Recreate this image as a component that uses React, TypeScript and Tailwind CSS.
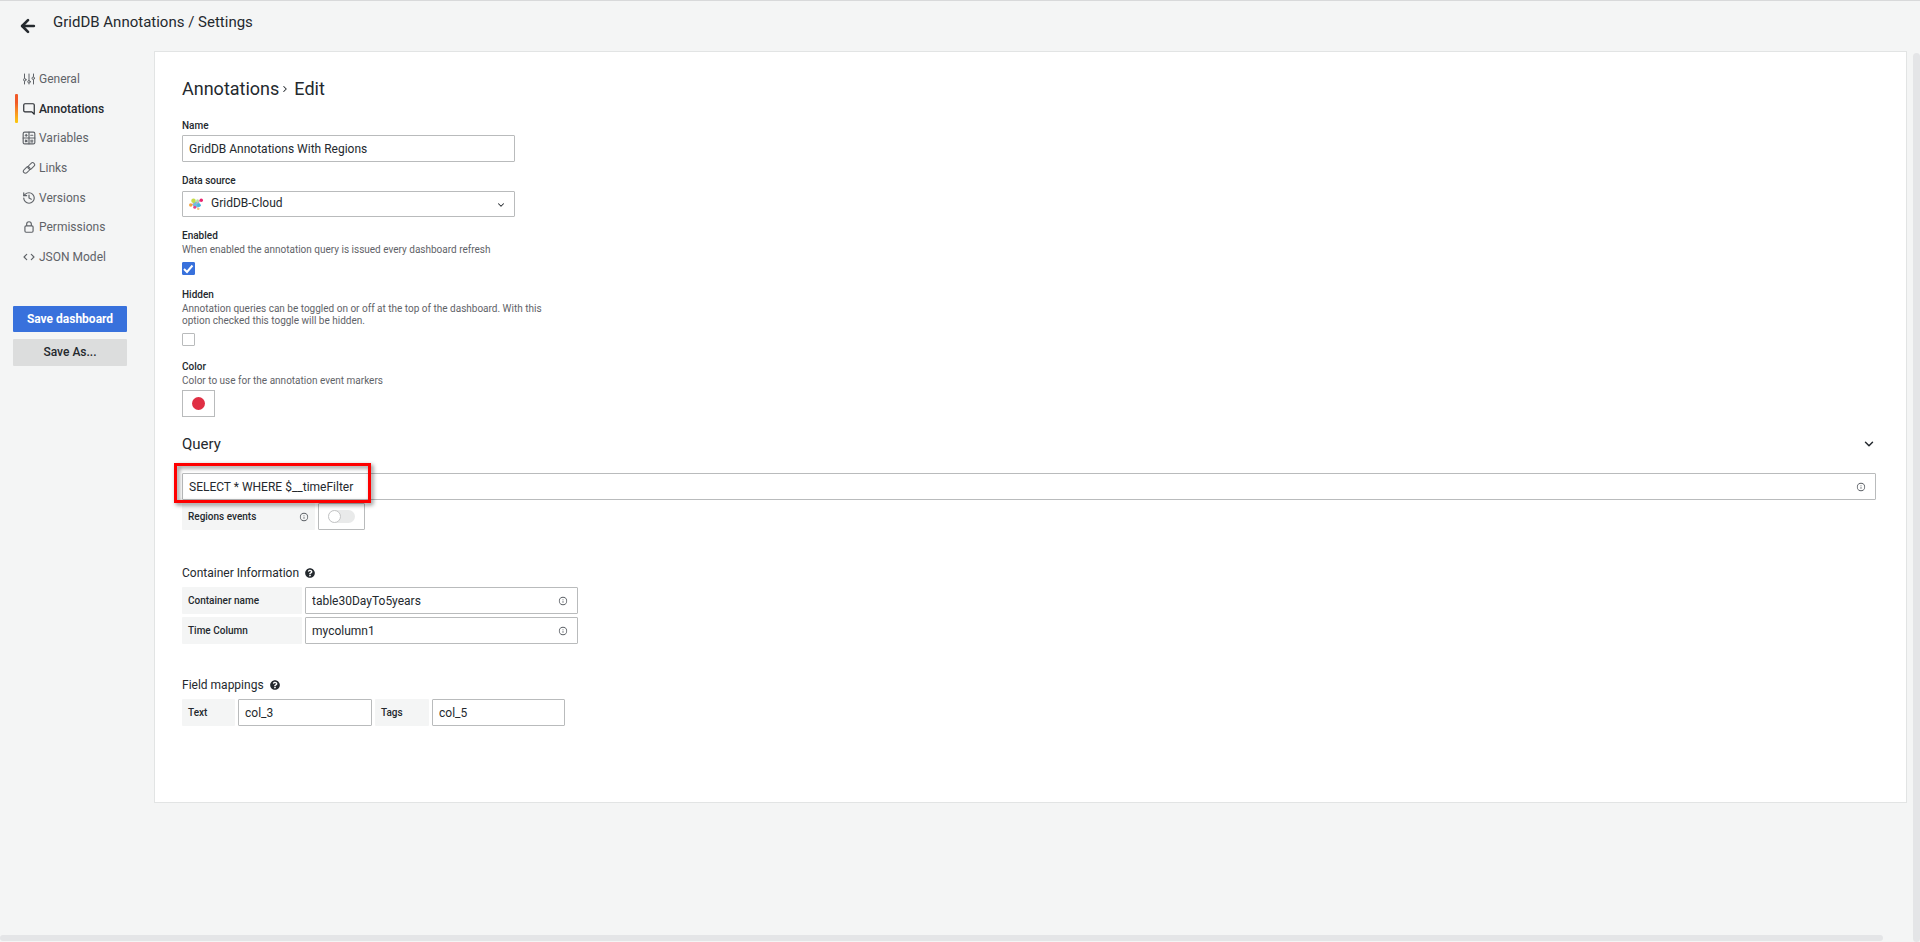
import { useState } from "react";
import type { ReactNode } from "react";
import { ArrowLeft, ChevronDown, ChevronRight, History } from "lucide-react";
import { FaQuestionCircle } from "react-icons/fa";

const INPUT =
  "h-[27px] rounded-[1px] border border-[#b9bbbc] bg-white px-1.5 text-xs text-[#24292e] focus:outline-none focus:border-[#3871dc]";
const LABEL = "block text-[10px] leading-[14px] font-medium";
const INLINE_LABEL =
  "flex h-[27px] items-center rounded-[1px] bg-[#f4f5f5] px-1.5 text-[10px] font-medium text-[#24292e]";

function SlidersIcon() {
  return (
    <svg viewBox="0 0 24 24" className="size-3" fill="none" stroke="currentColor" strokeWidth="2" strokeLinecap="round">
      <path d="M3 2v8M3 17v5M12 2v12M12 21v1M21 2v5M21 14v8" />
      <circle cx="3.500" cy="13.500" r="2.500" />
      <circle cx="12" cy="17.500" r="2.500" />
      <circle cx="20.500" cy="10.500" r="2.500" />
    </svg>
  );
}

function CommentIcon() {
  return (
    <svg viewBox="0 0 24 24" className="size-3.5" fill="currentColor">
      <path d="M19,2H5A3,3,0,0,0,2,5V15a3,3,0,0,0,3,3H16.59l3.7,3.71A1,1,0,0,0,21,22a.84.84,0,0,0,.38-.08A1,1,0,0,0,22,21V5A3,3,0,0,0,19,2Zm1,16.59-2.29-2.3A1,1,0,0,0,17,16H5a1,1,0,0,1-1-1V5A1,1,0,0,1,5,4H19a1,1,0,0,1,1,1Z" />
    </svg>
  );
}

function VariablesIcon() {
  return (
    <svg viewBox="0 0 24 24" className="size-3.5" fill="none" stroke="currentColor" strokeWidth="2" strokeLinecap="round">
      <rect x="2" y="2" width="20" height="20" rx="2.5" />
      <path d="M12 2v20M2 12h20M5.5 7.3h3.5M7.2 5.5V9M15 7.3h3.5M5.8 15.6l2.8 2.8M8.6 15.6l-2.8 2.8M15 15.8h3.5M15 18.6h3.5" />
    </svg>
  );
}

function LinkIcon() {
  return (
    <svg viewBox="0 0 24 24" className="size-3.5" fill="none" stroke="currentColor" strokeWidth="1.8">
      <rect x="9.500" y="5" width="13" height="7" rx="3.500" transform="rotate(-45 16 8.500)" />
      <rect x="1.500" y="12" width="13" height="7" rx="3.500" transform="rotate(-45 8 15.500)" />
    </svg>
  );
}

function LockIcon() {
  return (
    <svg viewBox="0 0 24 24" className="size-3.5" fill="currentColor">
      <path d="M17,9V7A5,5,0,0,0,7,7V9a3,3,0,0,0-3,3v7a3,3,0,0,0,3,3H17a3,3,0,0,0,3-3V12A3,3,0,0,0,17,9ZM9,7a3,3,0,0,1,6,0V9H9Zm9,12a1,1,0,0,1-1,1H7a1,1,0,0,1-1-1V12a1,1,0,0,1,1-1H17a1,1,0,0,1,1,1Z" />
    </svg>
  );
}

function BracketsIcon() {
  return (
    <svg viewBox="0 0 24 24" className="size-3.5" fill="none" stroke="currentColor" strokeWidth="2" strokeLinecap="round" strokeLinejoin="round">
      <path d="M8 7.500 3.500 12 8 16.500M16 7.500 20.500 12 16 16.500" />
    </svg>
  );
}

function InfoIcon() {
  return (
    <svg viewBox="0 0 24 24" className="size-2.5 shrink-0 text-[#5c6066]" fill="currentColor">
      <path d="M12,2A10,10,0,1,0,22,12,10,10,0,0,0,12,2Zm0,18a8,8,0,1,1,8-8A8,8,0,0,1,12,20Zm0-8.5a1,1,0,0,0-1,1v3a1,1,0,0,0,2,0v-3A1,1,0,0,0,12,11.5Zm0-4a1.25,1.25,0,1,0,1.25,1.25A1.25,1.25,0,0,0,12,7.5Z" />
    </svg>
  );
}

function GridDBLogo() {
  return (
    <svg viewBox="0 0 28 24" className="h-3 w-3.5">
      <path d="M8 8l11-2 4 9-5 4-8-1-3-4z" fill="#6cc0de" />
      <path d="M23 5l-9 6M4 15l6-4" stroke="#e79ab5" strokeWidth="2" />
      <circle cx="9" cy="5.500" r="4.500" fill="#c6dc4a" />
      <circle cx="17" cy="5.500" r="3" fill="#b9dfa8" />
      <circle cx="24.500" cy="4.500" r="3.500" fill="#e9246f" />
      <circle cx="3.500" cy="14" r="3.500" fill="#f5a33c" />
      <circle cx="11.500" cy="18.500" r="3" fill="#e6408a" />
      <circle cx="18.500" cy="21.500" r="2.500" fill="#f9c27a" />
      <circle cx="20" cy="14.500" r="3.500" fill="#46b4e0" />
    </svg>
  );
}

const NAV_ITEMS: { label: string; icon: ReactNode; active?: boolean }[] = [
  { label: "General", icon: <SlidersIcon /> },
  { label: "Annotations", icon: <CommentIcon />, active: true },
  { label: "Variables", icon: <VariablesIcon /> },
  { label: "Links", icon: <LinkIcon /> },
  { label: "Versions", icon: <History className="size-3.5" /> },
  { label: "Permissions", icon: <LockIcon /> },
  { label: "JSON Model", icon: <BracketsIcon /> },
];

function Sidebar() {
  return (
    <aside className="w-[154px] shrink-0 pt-[13px]">
      <nav className="grid h-52 auto-rows-fr pl-[15px]">
        {NAV_ITEMS.map(item => (
          <a
            key={item.label}
            href="#"
            className={`relative flex items-center gap-[3px] pl-[7px] text-xs ${
              item.active ? "font-medium text-[#24292e]" : "text-[#5f6368] hover:text-[#24292e]"
            }`}
          >
            {item.active && (
              <span className="absolute inset-y-0 left-0 w-[3px] rounded-[1px] bg-linear-to-b from-[#f05a28] from-30% to-[#fbca0a]" />
            )}
            <span className="flex w-3.5 justify-center">{item.icon}</span>
            {item.label}
          </a>
        ))}
      </nav>
      <div className="mt-[34px] flex flex-col gap-[7px] pr-[27px] pl-[13px]">
        <button className="h-[26px] rounded-[1px] bg-[#3871dc] text-xs font-bold text-white">Save dashboard</button>
        <button className="h-[27px] rounded-[1px] bg-[#dcdddd] pb-px text-xs font-medium text-[#24292e]">Save As...</button>
      </div>
    </aside>
  );
}

interface CheckFieldProps {
  id: string;
  label: string;
  description: string;
  checked: boolean;
  onChange: (value: boolean) => void;
}

function CheckField({ id, label, description, checked, onChange }: CheckFieldProps) {
  return (
    <div>
      <label htmlFor={id} className={LABEL}>{label}</label>
      <p className="mt-px max-w-[380px] text-[10px] leading-3 text-[#5f6368]">{description}</p>
      <div className="relative mt-1.5 size-[13px]">
        <input
          id={id}
          type="checkbox"
          checked={checked}
          onChange={e => onChange(e.target.checked)}
          className="peer block size-[13px] appearance-none rounded-[1px] border border-[#b9bbbc] bg-white checked:border-[#3871dc] checked:bg-[#3871dc]"
        />
        <svg viewBox="0 0 13 13" className="pointer-events-none absolute inset-0 hidden peer-checked:block" fill="none" stroke="white" strokeWidth="2">
          <path d="M2 7l3 3 5.500-6.500" />
        </svg>
      </div>
    </div>
  );
}

function InfoInput({ id, value, onChange }: { id: string; value: string; onChange: (value: string) => void }) {
  return (
    <div className="relative flex-1">
      <input id={id} value={value} onChange={e => onChange(e.target.value)} className={`${INPUT} block w-full pr-7`} />
      <span className="absolute inset-y-0 right-2.5 flex items-center"><InfoIcon /></span>
    </div>
  );
}

export default function App() {
  const [name, setName] = useState("GridDB Annotations With Regions");
  const [enabled, setEnabled] = useState(true);
  const [hidden, setHidden] = useState(false);
  const [query, setQuery] = useState("SELECT * WHERE $__timeFilter");
  const [regions, setRegions] = useState(false);
  const [container, setContainer] = useState("table30DayTo5years");
  const [timeColumn, setTimeColumn] = useState("mycolumn1");
  const [textField, setTextField] = useState("col_3");
  const [tagsField, setTagsField] = useState("col_5");

  return (
    <div className="flex min-h-screen flex-col border-t border-[#d8d9da] bg-[#f4f5f5] font-[Roboto,sans-serif] text-[#24292e]">
      <header className="flex h-[50px] items-start pl-[18px]">
        <button aria-label="Back" className="mt-[15px] mr-[15px]">
          <ArrowLeft className="size-5" strokeWidth={3.2} />
        </button>
        <h1 className="mt-3 text-[15px] leading-[18px]">GridDB Annotations / Settings</h1>
      </header>

      <div className="flex flex-1">
        <Sidebar />

        <main className="min-w-0 flex-1">
          <div className="border border-[#e2e4e4] bg-white pt-[25px] pr-[30px] pb-[76px] pl-[27px]">
            <h2 className="flex items-center text-lg leading-6">
              Annotations
              <ChevronRight className="mr-1 ml-px size-2.5" strokeWidth={2.5} />
              Edit
            </h2>

            <label htmlFor="name" className={`${LABEL} mt-[18px]`}>Name</label>
            <input id="name" value={name} onChange={e => setName(e.target.value)} className={`${INPUT} mt-[2px] block w-[333px]`} />

            <label htmlFor="source" className={`${LABEL} mt-3`}>Data source</label>
            <div className="relative mt-[3px] w-[333px]">
              <select id="source" className="block h-[26px] w-full appearance-none rounded-[1px] border border-[#b9bbbc] bg-white pb-[2px] pl-7 text-xs">
                <option>GridDB-Cloud</option>
              </select>
              <span className="pointer-events-none absolute inset-y-0 left-[7px] flex items-center"><GridDBLogo /></span>
              <ChevronDown className="pointer-events-none absolute top-[9px] right-[9px] size-2.5" strokeWidth={2.5} />
            </div>

            <div className="mt-3 flex flex-col gap-[13px]">
              <CheckField
                id="enabled"
                label="Enabled"
                description="When enabled the annotation query is issued every dashboard refresh"
                checked={enabled}
                onChange={setEnabled}
              />
              <CheckField
                id="hidden"
                label="Hidden"
                description="Annotation queries can be toggled on or off at the top of the dashboard. With this option checked this toggle will be hidden."
                checked={hidden}
                onChange={setHidden}
              />
            </div>

            <h3 className={`${LABEL} mt-3.5`}>Color</h3>
            <p className="text-[10px] leading-[14px] text-[#5f6368]">Color to use for the annotation event markers</p>
            <button aria-label="Pick color" className="mt-[2px] flex h-[27px] w-[33px] items-center justify-center border border-[#b9bbbc] bg-white">
              <span className="size-[13px] rounded-full bg-[#e02f44]" />
            </button>

            <div className="mt-[17px] flex items-center justify-between">
              <label htmlFor="query" className="text-[15px] leading-5">Query</label>
              <button aria-label="Collapse query"><ChevronDown className="size-3.5" strokeWidth={2.5} /></button>
            </div>

            <div className="relative mt-[19px] flex">
              <InfoInput id="query" value={query} onChange={setQuery} />
              <span className="pointer-events-none absolute -top-[10px] -left-2 z-10 h-10 w-[197px] border-3 border-[#fe0000] drop-shadow-[2px_2px_2px_rgba(0,0,0,0.5)]" />
            </div>

            <div className="mt-[3px] flex gap-[3px]">
              <label htmlFor="regions" className={`${INLINE_LABEL} w-[133px] justify-between`}>
                Regions events
                <InfoIcon />
              </label>
              <div className="flex h-[27px] w-[47px] items-center justify-center rounded-[1px] border border-[#b9bbbc]">
                <div className="relative h-[13px] w-[27px]">
                  <input
                    id="regions"
                    type="checkbox"
                    role="switch"
                    checked={regions}
                    onChange={e => setRegions(e.target.checked)}
                    className="peer block h-[13px] w-[27px] appearance-none rounded-full bg-[#e9eaea] checked:bg-[#3871dc]"
                  />
                  <span className="pointer-events-none absolute inset-y-0 left-0 w-[13px] rounded-full border border-[#c4c5c6] bg-white peer-checked:left-3.5" />
                </div>
              </div>
            </div>

            <h3 className="mt-[33px] flex items-center gap-1.5 text-xs leading-5">
              Container Information
              <FaQuestionCircle className="size-2.5" />
            </h3>
            <div className="mt-1 flex w-[396px] flex-col gap-[3px]">
              <div className="flex gap-[3px]">
                <label htmlFor="container" className={`${INLINE_LABEL} w-[120px]`}>Container name</label>
                <InfoInput id="container" value={container} onChange={setContainer} />
              </div>
              <div className="flex gap-[3px]">
                <label htmlFor="time" className={`${INLINE_LABEL} w-[120px]`}>Time Column</label>
                <InfoInput id="time" value={timeColumn} onChange={setTimeColumn} />
              </div>
            </div>

            <h3 className="mt-[31px] flex items-center gap-1.5 text-xs leading-5">
              Field mappings
              <FaQuestionCircle className="size-2.5" />
            </h3>
            <div className="mt-1 flex gap-[3px]">
              <label htmlFor="text" className={`${INLINE_LABEL} w-[53px]`}>Text</label>
              <input id="text" value={textField} onChange={e => setTextField(e.target.value)} className={`${INPUT} w-[134px]`} />
              <label htmlFor="tags" className={`${INLINE_LABEL} w-[54px]`}>Tags</label>
              <input id="tags" value={tagsField} onChange={e => setTagsField(e.target.value)} className={`${INPUT} w-[133px]`} />
            </div>
          </div>
        </main>

        <div className="ml-1.5 flex w-[7px] pt-[2px]">
          <div className="w-full rounded-full bg-[#e4e5e7]" />
        </div>
      </div>

      <div className="-mt-[7px] mr-[37px] mb-px h-1.5 rounded-full bg-[#e4e5e7]" />
    </div>
  );
}
